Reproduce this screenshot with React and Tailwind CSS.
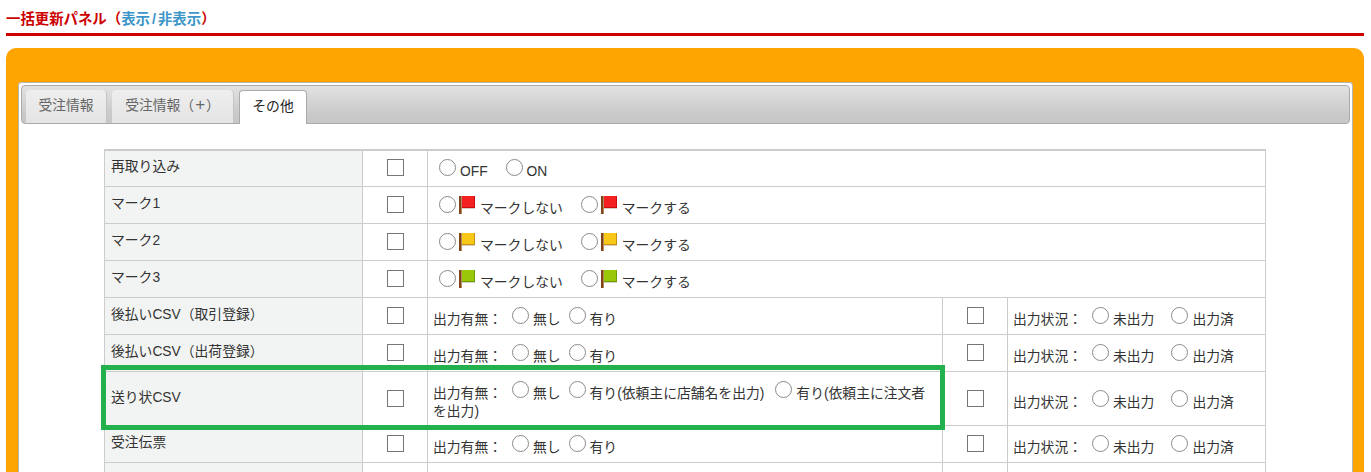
import React from 'react';

const FONT = { fontFamily: '"Liberation Sans", "Noto Sans CJK JP", sans-serif' };

function Radio() {
  return <span className="inline-block w-[17px] h-[17px] rounded-full border-[1.5px] border-[#8a8a8a] bg-white align-baseline" />;
}

function Check({ className = '' }) {
  return <span className={`inline-block w-[17px] h-[17px] border border-[#767676] bg-white align-middle ${className}`} />;
}

function Flag({ fill, edge }) {
  return (
    <svg width="16" height="18" viewBox="0 0 16 18" className="inline-block align-[-1px]">
      <rect x="0" y="0" width="2" height="18" fill="#7f4519" />
      <rect x="2" y="0" width="1" height="18" fill="#b58a62" />
      <rect x="3" y="0" width="13" height="12" fill={fill} />
      <rect x="3" y="11" width="13" height="1" fill={edge} />
      <rect x="15" y="0" width="1" height="12" fill={edge} />
      <rect x="3" y="12" width="13" height="1" fill="#d8d0c0" />
    </svg>
  );
}

function Opt({ children, className = '' }) {
  return (
    <span className={className}>
      <Radio />
      <span className="ml-[4px]">{children}</span>
    </span>
  );
}

function MarkCell({ fill, edge }) {
  return (
    <td colSpan={3} className="border border-[#ccc] pl-[11px] pt-[6px]">
      <Radio />
      <span className="ml-[3px]"><Flag fill={fill} edge={edge} /></span>
      <span className="ml-[5px]">マークしない</span>
      <span className="ml-[18px]"><Radio /></span>
      <span className="ml-[3px]"><Flag fill={fill} edge={edge} /></span>
      <span className="ml-[5px]">マークする</span>
    </td>
  );
}

function OutputStatus({ pad = 'pt-[7px]' }) {
  return (
    <>
      <td className="border border-[#ccc] text-center"><Check /></td>
      <td className={`border border-[#ccc] pl-[5px] ${pad}`}>
        出力状況：
        <Opt className="ml-[10px]">未出力</Opt>
        <Opt className="ml-[17px]">出力済</Opt>
      </td>
    </>
  );
}

function Label({ children, pad = 'pb-0' }) {
  return <td className={`border border-[#ccc] bg-[#f2f4f3] pl-[6px] text-[#333] ${pad}`}>{children}</td>;
}

function OutputRow({ label }) {
  return (
    <tr className="h-[37px]">
      <Label>{label}</Label>
      <td className="border border-[#ccc] text-center"><Check /></td>
      <td className="border border-[#ccc] pl-[5px] pt-[7px]">
        出力有無：
        <Opt className="ml-[10px]">無し</Opt>
        <Opt className="ml-[8px]">有り</Opt>
      </td>
      <OutputStatus />
    </tr>
  );
}

function MarkRow({ label, fill, edge }) {
  return (
    <tr className="h-[37px]">
      <Label>{label}</Label>
      <td className="border border-[#ccc] text-center"><Check /></td>
      <MarkCell fill={fill} edge={edge} />
    </tr>
  );
}

export default function App() {
  return (
    <div className="relative h-[472px] overflow-hidden bg-white text-[13.8px] text-[#333]" style={FONT}>
      <div className="ml-[6px] mr-[7px] pt-[9px] h-[36px] border-b-[3px] border-[#c00] text-[14.4px] font-bold text-[#c00] leading-[20px]">
        一括更新パネル（<span className="text-[#3c96c8]">表示<span className="mx-[2px]">/</span>非表示</span>）
      </div>

      <div className="ml-[6px] mr-[7px] mt-[12px] rounded-t-[10px] bg-[#ffa500] pl-[12px] pr-[11px] pt-[34px] h-[600px]">
        <div className="rounded-t-[3px] border border-[#b5b5b5] bg-white p-[2px] h-[500px]">
          <div className="flex items-end gap-[5px] h-[39px] rounded-[4px] border border-[#aaa] pl-[4px] bg-gradient-to-b from-[#e2e2e2] to-[#c8c8c8] to-80%">
            <div className="w-[81px] h-[33px] flex items-center justify-center rounded-t-[4px] border-r border-[#c4c4c4] bg-gradient-to-b from-[#eee] to-[#e4e4e4] text-[#666]">受注情報</div>
            <div className="w-[122px] h-[33px] flex items-center justify-center rounded-t-[4px] border-r border-[#c4c4c4] bg-gradient-to-b from-[#eee] to-[#e4e4e4] text-[#666]">
              <span>受注情報（<span className="mx-px text-[17px] leading-none">+</span>）</span>
            </div>
            <div className="w-[68px] h-[34px] -mb-px flex items-center justify-center rounded-t-[4px] border border-b-0 border-[#aaa] bg-white text-[#222]">その他</div>
          </div>

          <table className="mt-[25px] ml-[83px] w-[1161px] table-fixed border-collapse border-t-2 border-[#ccc]">
            <colgroup>
              <col className="w-[258px]" />
              <col className="w-[65px]" />
              <col className="w-[515px]" />
              <col className="w-[65px]" />
              <col className="w-[258px]" />
            </colgroup>
            <tbody>
              <tr className="h-[36px]">
                <Label pad="pb-[1px]">再取り込み</Label>
                <td className="border border-[#ccc] text-center"><Check className="-mt-px" /></td>
                <td colSpan={3} className="border border-[#ccc] pl-[11px] pt-[6px]">
                  <Opt>OFF</Opt>
                  <Opt className="ml-[18px]">ON</Opt>
                </td>
              </tr>
              <MarkRow label="マーク1" fill="#f52020" edge="#c81010" />
              <MarkRow label="マーク2" fill="#f8c818" edge="#c89010" />
              <MarkRow label="マーク3" fill="#98c808" edge="#70a000" />
              <OutputRow label="後払いCSV（取引登録）" />
              <OutputRow label="後払いCSV（出荷登録）" />
              <tr className="h-[54px]">
                <Label>送り状CSV</Label>
                <td className="border border-[#ccc] text-center"><Check /></td>
                <td className="border border-[#ccc] pl-[5px] pr-[12px] pt-[5px] leading-[18px]">
                  出力有無：
                  <Opt className="ml-[10px]">無し</Opt>
                  <Opt className="ml-[8px]">有り(依頼主に店舗名を出力)</Opt>
                  <Opt className="ml-[11px]">有り(依頼主に注文者を出力)</Opt>
                </td>
                <OutputStatus pad="pt-[8px]" />
              </tr>
              <OutputRow label="受注伝票" />
              <tr className="h-[37px]">
                <td className="border border-[#ccc] bg-[#f2f4f3]" />
                <td className="border border-[#ccc]" />
                <td className="border border-[#ccc]" />
                <td className="border border-[#ccc]" />
                <td className="border border-[#ccc]" />
              </tr>
            </tbody>
          </table>
        </div>
      </div>

      <div className="absolute left-[101px] top-[365px] w-[844px] h-[65px] border-[5px] border-[#22b14c]" />
    </div>
  );
}
